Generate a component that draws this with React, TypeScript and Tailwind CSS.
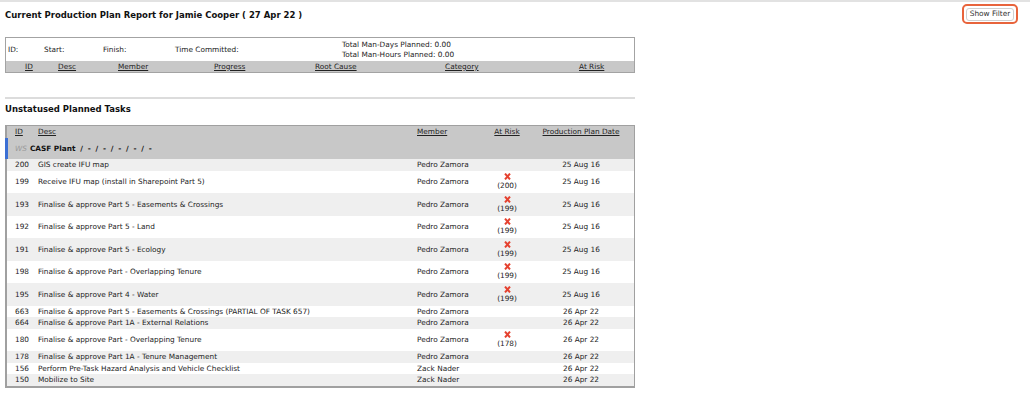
import React from "react";

type Row = { id: string; desc: string; member: string; risk?: string; date: string };

const rows: Row[] = [
  { id: "200", desc: "GIS create IFU map", member: "Pedro Zamora", date: "25 Aug 16" },
  { id: "199", desc: "Receive IFU map (install in Sharepoint Part 5)", member: "Pedro Zamora", risk: "(200)", date: "25 Aug 16" },
  { id: "193", desc: "Finalise & approve Part 5 - Easements & Crossings", member: "Pedro Zamora", risk: "(199)", date: "25 Aug 16" },
  { id: "192", desc: "Finalise & approve Part 5 - Land", member: "Pedro Zamora", risk: "(199)", date: "25 Aug 16" },
  { id: "191", desc: "Finalise & approve Part 5 - Ecology", member: "Pedro Zamora", risk: "(199)", date: "25 Aug 16" },
  { id: "198", desc: "Finalise & approve Part - Overlapping Tenure", member: "Pedro Zamora", risk: "(199)", date: "25 Aug 16" },
  { id: "195", desc: "Finalise & approve Part 4 - Water", member: "Pedro Zamora", risk: "(199)", date: "25 Aug 16" },
  { id: "663", desc: "Finalise & approve Part 5 - Easements & Crossings (PARTIAL OF TASK 657)", member: "Pedro Zamora", date: "26 Apr 22" },
  { id: "664", desc: "Finalise & approve Part 1A - External Relations", member: "Pedro Zamora", date: "26 Apr 22" },
  { id: "180", desc: "Finalise & approve Part - Overlapping Tenure", member: "Pedro Zamora", risk: "(178)", date: "26 Apr 22" },
  { id: "178", desc: "Finalise & approve Part 1A - Tenure Management", member: "Pedro Zamora", date: "26 Apr 22" },
  { id: "156", desc: "Perform Pre-Task Hazard Analysis and Vehicle Checklist", member: "Zack Nader", date: "26 Apr 22" },
  { id: "150", desc: "Mobilize to Site", member: "Zack Nader", date: "26 Apr 22" },
];

function RedX() {
  return (
    <svg width="7" height="7" viewBox="0 0 7 7" className="block">
      <path d="M1 0.6 L6 6.4 M6 0.6 L1 6.4" stroke="#e5412f" strokeWidth="2" strokeLinecap="butt" />
    </svg>
  );
}

export default function App() {
  return (
    <div className="w-[1030px] h-[399px] bg-white border-t-2 border-[#e2e2e2] font-['DejaVu_Sans',sans-serif] text-[7.35px] text-[#222] overflow-hidden">
      <div className="flex justify-between items-start h-[35px]">
        <h1 className="ml-[5px] mt-[8px] text-[8.5px] leading-[10px] font-bold text-[#111]">
          Current Production Plan Report for Jamie Cooper ( 27 Apr 22 )
        </h1>
        <div className="mt-[2px] mr-[12px] w-[56px] h-[20px] border-2 border-[#e8643c] rounded-[5px] flex items-center justify-center">
          <div className="w-[48px] h-[13px] border border-[#d0d0d0] rounded-[3px] bg-white flex items-center justify-center text-[7.4px] text-[#333] leading-none">
            Show Filter
          </div>
        </div>
      </div>

      <div className="ml-[5px] w-[630px] border border-[#a3a3a3]">
        <div className="flex items-center h-[23px] leading-[10px]">
          <div className="w-[38px] pl-[2px]">ID:</div>
          <div className="w-[59px]">Start:</div>
          <div className="w-[72px]">Finish:</div>
          <div className="w-[167px]">Time Committed:</div>
          <div className="flex flex-col">
            <span>Total Man-Days Planned: 0.00</span>
            <span>Total Man-Hours Planned: 0.00</span>
          </div>
        </div>
        <div className="flex items-center h-[11px] bg-[#c8c8c8] underline leading-none">
          <div className="w-[19px]" />
          <div className="w-[33px]">ID</div>
          <div className="w-[60px]">Desc</div>
          <div className="w-[96px]">Member</div>
          <div className="w-[101px]">Progress</div>
          <div className="w-[130px]">Root Cause</div>
          <div className="w-[134px]">Category</div>
          <div>At Risk</div>
        </div>
      </div>

      <div className="ml-[5px] mt-[24px] w-[630px] h-[2px] bg-[#dcdcdc]" />

      <h2 className="ml-[5px] mt-[5px] text-[8.5px] leading-[10px] font-bold text-[#111]">Unstatused Planned Tasks</h2>

      <div className="ml-[5px] mt-[11px] w-[630px] border border-[#a0a0a0] border-l-2 border-b-2">
        <div className="flex items-center h-[12px] bg-[#c8c8c8] underline leading-none">
          <div className="w-[31px] pl-[8px]">ID</div>
          <div className="w-[379px]">Desc</div>
          <div className="w-[74px]">Member</div>
          <div className="w-[32px] text-center">At Risk</div>
          <div className="w-[111px] pl-[5px] text-center">Production Plan Date</div>
        </div>
        <div className="-ml-[2px] flex items-center h-[21px] bg-[#c8c8c8] border-l-[3px] border-[#3b6fd4] leading-none whitespace-pre">
          <span className="pl-[7px] italic text-[#9a9a9a]">WS</span>
          <span className="pl-[3px] font-bold text-[#111]">CASF Plant</span>
          <span className="font-bold text-[#111] [word-spacing:2.2px]"> / - / - / - / - / -</span>
        </div>
        {rows.map((r, i) => (
          <div
            key={r.id}
            className={`flex items-center leading-[9px] ${r.risk ? "h-[22.5px]" : "h-[11.5px]"} ${i % 2 === 0 ? "bg-[#efefef]" : "bg-white"}`}
          >
            <div className="w-[31px] pl-[8px]">{r.id}</div>
            <div className="w-[379px] whitespace-nowrap">{r.desc}</div>
            <div className="w-[74px]">{r.member}</div>
            <div className="w-[32px] flex flex-col items-center">
              {r.risk ? (
                <>
                  <RedX />
                  <span className="mt-[1px]">{r.risk}</span>
                </>
              ) : null}
            </div>
            <div className="w-[111px] pl-[5px] text-center">{r.date}</div>
          </div>
        ))}
      </div>
    </div>
  );
}
